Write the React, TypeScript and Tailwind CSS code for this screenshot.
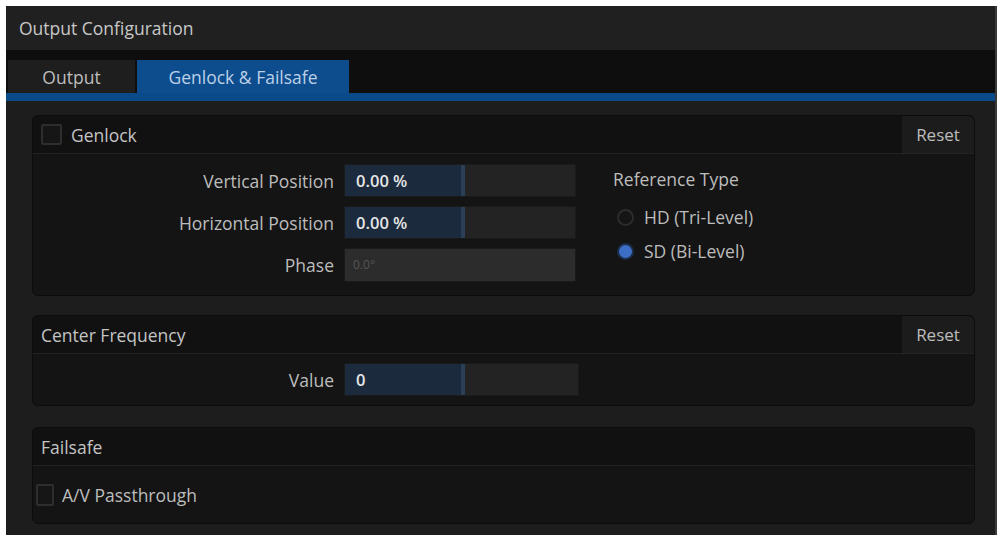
import React from "react";

const font = { fontFamily: '"Open Sans", "Noto Sans", sans-serif' };

function Slider({ value, w = "w-[232px]", fill = "w-[120px]" }: { value: string; w?: string; fill?: string }) {
  return (
    <div className={`${w} h-[33px] bg-[#232323] flex border border-[#1a1a1a]`}>
      <div className={`${fill} h-full bg-[#1b2a3d] border-r-[4px] border-[#2b3f57] flex items-center pl-[11px] text-[16.5px] leading-[20px] font-semibold text-[#e6e6e6]`}>
        {value}
      </div>
    </div>
  );
}

function Checkbox({ size = "w-[21px] h-[21px]" }: { size?: string }) {
  return <div className={`${size} border-[2px] border-[#2e2e2e] bg-[#161616] rounded-[2px]`} />;
}

function Header({ children, reset }: { children: React.ReactNode; reset?: boolean }) {
  return (
    <div className="h-[38px] flex items-stretch bg-[#111111] border-b border-[#222] rounded-t-[6px]">
      <div className="flex-1 flex items-center pl-[8px] gap-[9px] text-[17.5px] leading-[20px] text-[#c4c4c4]">{children}</div>
      {reset && (
        <div className="w-[72px] bg-[#1c1c1c] flex items-center justify-center text-[17px] leading-[20px] text-[#bdbdbd] rounded-tr-[6px]">
          Reset
        </div>
      )}
    </div>
  );
}

const label = "w-[301px] text-right text-[17.5px] leading-[20px] text-[#bdbdbd]";

export default function App() {
  return (
    <div className="w-[1001px] h-[537px] bg-white pt-[6px] pl-[6px] pr-[4px] pb-[2px]" style={font}>
      <div className="h-full flex flex-col bg-[#1d1d1d] border-r-[2px] border-[#3a3a3a]">
        <div className="h-[44px] bg-[#202020] flex items-center pl-[13px] text-[17.5px] leading-[20px] text-[#c8c8c8]">
          Output Configuration
        </div>
        <div className="h-[43px] bg-[#0e0e0e] flex items-end pl-[2px] gap-[2px]">
          <div className="w-[127px] h-[33px] bg-[#1e1e1e] flex items-center justify-center text-[17.5px] leading-[20px] text-[#bdbdbd]">
            Output
          </div>
          <div className="w-[212px] h-[33px] bg-[#0d4d8e] flex items-center justify-center text-[17.5px] leading-[20px] text-[#bcd0e6]">
            Genlock &amp; Failsafe
          </div>
        </div>
        <div className="h-[8px] bg-[#0b4a88]" />
        <div className="flex-1 flex flex-col pl-[26px] pr-[20px] pt-[14px]">
          {/* Genlock */}
          <div className="h-[181px] flex flex-col bg-[#141414] rounded-[6px] border border-[#0c0c0c]">
            <Header reset>
              <Checkbox />
              <span>Genlock</span>
            </Header>
            <div className="flex-1 flex pt-[10px]">
              <div className="flex flex-col gap-[9px]">
                {[
                  ["Vertical Position", "0.00 %"],
                  ["Horizontal Position", "0.00 %"],
                ].map(([l, v]) => (
                  <div key={l} className="flex items-center gap-[10px]">
                    <div className={label}>{l}</div>
                    <Slider value={v} />
                  </div>
                ))}
                <div className="flex items-center gap-[10px]">
                  <div className={label}>Phase</div>
                  <div className="w-[232px] h-[34px] bg-[#2c2c2c] border border-[#1a1a1a] flex items-center pl-[8px] text-[12px] text-[#555]">
                    0.0°
                  </div>
                </div>
              </div>
              <div className="ml-[37px] flex flex-col pt-[5px]">
                <div className="text-[17.5px] leading-[20px] text-[#bdbdbd]">Reference Type</div>
                <div className="mt-[18px] pl-[4px] flex items-center gap-[10px] text-[17.5px] leading-[20px] text-[#bdbdbd]">
                  <div className="w-[17px] h-[17px] rounded-full border-[2px] border-[#2c2c2c] bg-[#151515]" />
                  HD (Tri-Level)
                </div>
                <div className="mt-[14px] pl-[4px] flex items-center gap-[10px] text-[17.5px] leading-[20px] text-[#bdbdbd]">
                  <div className="w-[17px] h-[17px] rounded-full border-[2px] border-[#1c2d4a] bg-[#3b6ec4]" />
                  SD (Bi-Level)
                </div>
              </div>
            </div>
          </div>
          {/* Center Frequency */}
          <div className="mt-[19px] h-[91px] flex flex-col bg-[#141414] rounded-[6px] border border-[#0c0c0c]">
            <Header reset>
              <span>Center Frequency</span>
            </Header>
            <div className="flex-1 flex items-center">
              <div className="flex items-center gap-[10px]">
                <div className={label}>Value</div>
                <Slider value="0" w="w-[235px]" fill="w-[120px]" />
              </div>
            </div>
          </div>
          {/* Failsafe */}
          <div className="mt-[21px] h-[97px] flex flex-col bg-[#141414] rounded-[6px] border border-[#0c0c0c]">
            <Header>
              <span>Failsafe</span>
            </Header>
            <div className="flex-1 flex items-center pl-[3px] gap-[8px] text-[17.5px] leading-[20px] text-[#bdbdbd]">
              <Checkbox size="w-[18px] h-[22px]" />
              <span>A/V Passthrough</span>
            </div>
          </div>
        </div>
      </div>
    </div>
  );
}
